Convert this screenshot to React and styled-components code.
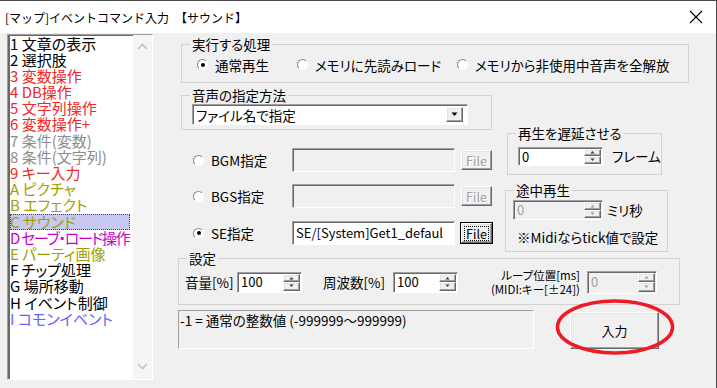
import React from "react";
import styled, { createGlobalStyle } from "styled-components";

const GlobalStyle = createGlobalStyle`
  html, body {
    margin: 0;
    padding: 0;
    background: #f0f0f0;
  }
  body {
    font-family: "Noto Sans CJK JP", "Noto Sans", sans-serif;
  }
`;

const items = [
  { text: "1 文章の表示", color: "#000000" },
  { text: "2 選択肢", color: "#000000" },
  { text: "3 変数操作", color: "#f02828" },
  { text: "4 DB操作", color: "#f02828" },
  { text: "5 文字列操作", color: "#f02828" },
  { text: "6 変数操作+", color: "#f02828" },
  { text: "7 条件(変数)", color: "#8c8c8c" },
  { text: "8 条件(文字列)", color: "#8c8c8c" },
  { text: "9 キー入力", color: "#f02828" },
  { text: "A ピクチャ", color: "#a0a000" },
  { text: "B エフェクト", color: "#a0a000" },
  { text: "C サウンド", color: "#a0a000", selected: true },
  { text: "D セーブ・ロード操作", color: "#c800c8", tight: true },
  { text: "E パーティ画像", color: "#a0a000" },
  { text: "F チップ処理", color: "#000000" },
  { text: "G 場所移動", color: "#000000" },
  { text: "H イベント制御", color: "#000000" },
  { text: "I コモンイベント", color: "#6464ff" },
];

const sunken = `
  border: 1px solid;
  border-color: #a0a0a0 #ffffff #ffffff #a0a0a0;
  box-shadow: inset 1px 1px #696969;
`;

const raised = `
  border: 1px solid;
  border-color: #ffffff #696969 #696969 #ffffff;
  box-shadow: inset -1px -1px #a0a0a0, inset 1px 1px #e3e3e3;
`;

const Window = styled.div`
  position: relative;
  width: 717px;
  height: 388px;
  box-sizing: border-box;
  border-top: 1px solid #4a4a4a;
  border-right: 1px solid #4a4a4a;
  background: #f0f0f0;
  overflow: hidden;
  font-family: "Noto Sans CJK JP", "Noto Sans", sans-serif;
  font-feature-settings: "palt";
  color: #000;
`;

const TitleBar = styled.div`
  height: 32px;
  background: #ffffff;
  display: flex;
  align-items: center;
  justify-content: space-between;
  padding: 0 13px 0 5px;
  font-size: 12px;
  font-feature-settings: normal;
`;

const Body = styled.div`
  display: flex;
  height: 355px;
`;

const ListBox = styled.div`
  box-sizing: border-box;
  margin: 1px 0 0 7px;
  width: 146px;
  height: 346px;
  ${sunken}
  box-shadow: inset 2px 1px #696969;
  background: #ffffff;
  display: flex;
`;

const ItemList = styled.div`
  flex: 1;
  padding: 0.5px 0 0 2px;
`;

const Item = styled.div`
  box-sizing: border-box;
  height: 16.2px;
  line-height: 16.2px;
  font-size: 15px;
  white-space: nowrap;
  letter-spacing: ${(p) => (p.$tight ? "-1.3px" : "0")};
  color: ${(p) => p.$color};
  width: ${(p) => (p.$selected ? "120px" : "auto")};
  background: ${(p) => (p.$selected ? "#c8c8f0" : "transparent")};
  outline: ${(p) => (p.$selected ? "1px dotted #404040" : "none")};
  outline-offset: -1px;
`;

const ScrollTrack = styled.div`
  width: 19px;
  background: #f5f5f5;
  display: flex;
  flex-direction: column;
  justify-content: space-between;
  align-items: center;
  padding: 8px 0 9px;
`;

const RightPanel = styled.div`
  margin-left: 25px;
  display: flex;
  flex-direction: column;
  font-size: 13.5px;
`;

const Frame = styled.div`
  position: relative;
  box-sizing: border-box;
  width: ${(p) => p.$w}px;
  height: ${(p) => p.$h}px;
  margin: ${(p) => p.$mt || 0}px 0 0 ${(p) => p.$ml || 0}px;
  border: 1px solid #d2d2d2;
  padding: ${(p) => p.$pad || "0"};
`;

const Legend = styled.span`
  position: absolute;
  top: -9px;
  left: 8px;
  padding: 0 2px;
  background: #f0f0f0;
  font-size: 13.5px;
  line-height: 16px;
  white-space: nowrap;
`;

const RadioRow = styled.div`
  display: flex;
  align-items: center;
  height: 100%;
  padding: 2px 0 0 15px;
  box-sizing: border-box;
`;

const Option = styled.div`
  display: flex;
  align-items: center;
  width: ${(p) => (p.$w ? `${p.$w}px` : "auto")};
  white-space: nowrap;
`;

const Radio = styled.span`
  box-sizing: border-box;
  flex: none;
  width: 11px;
  height: 11px;
  border-radius: 50%;
  border: 1px solid;
  border-color: #8a8a8a #ffffff #ffffff #8a8a8a;
  background: #ffffff;
  display: inline-flex;
  align-items: center;
  justify-content: center;
  margin-right: 7px;
  &::after {
    content: "";
    width: 4px;
    height: 4px;
    border-radius: 50%;
    background: ${(p) => (p.$checked ? "#000000" : "transparent")};
  }
`;

const Row2 = styled.div`
  display: flex;
  align-items: flex-start;
`;

const LeftCol = styled.div`
  margin-left: 3px;
  width: 311px;
  display: flex;
  flex-direction: column;
`;

const RightCol = styled.div`
  margin-left: 13px;
  display: flex;
  flex-direction: column;
`;

const Select = styled.div`
  box-sizing: border-box;
  width: 276px;
  height: 21px;
  ${sunken}
  background: #ffffff;
  display: flex;
  align-items: center;
`;

const SelectText = styled.span`
  flex: 1;
  padding-left: 3px;
  line-height: 18px;
`;

const SelectArrow = styled.span`
  box-sizing: border-box;
  width: 17px;
  height: 15px;
  margin-right: 4px;
  ${raised}
  background: #f0f0f0;
  display: flex;
  align-items: center;
  justify-content: center;
`;

const FileRow = styled.div`
  display: flex;
  align-items: center;
  height: 24px;
  margin-top: ${(p) => p.$mt}px;
  padding-left: 12px;
`;

const RowLabel = styled.span`
  width: ${(p) => p.$w}px;
  white-space: nowrap;
`;

const TextBox = styled.div`
  box-sizing: border-box;
  width: 163px;
  height: 24px;
  ${sunken}
  background: ${(p) => (p.$enabled ? "#ffffff" : "#f0f0f0")};
  padding-left: 3px;
  font-size: 13px;
  line-height: 22px;
  white-space: nowrap;
`;

const FileButton = styled.span`
  box-sizing: border-box;
  width: 31px;
  height: 20px;
  margin-left: 6px;
  ${raised}
  background: #f0f0f0;
  display: flex;
  align-items: center;
  justify-content: center;
  font-size: 12.5px;
  color: ${(p) => (p.$enabled ? "#000000" : "#a0a0a0")};
  text-shadow: ${(p) => (p.$enabled ? "none" : "1px 1px #ffffff")};
  outline: ${(p) => (p.$enabled ? "1px solid #000" : "none")};
`;

const FocusText = styled.span`
  outline: 1px dotted #000;
  line-height: 13px;
  padding: 0 1px;
`;

const SpinBox = styled.div`
  box-sizing: border-box;
  flex: none;
  display: flex;
  width: ${(p) => p.$w}px;
  height: ${(p) => p.$h || 20}px;
  ${sunken}
  background: ${(p) => (p.$disabled ? "#f0f0f0" : "#ffffff")};
`;

const SpinValue = styled.span`
  flex: 1;
  padding-left: 3px;
  font-size: 13px;
  line-height: ${(p) => p.$lh || 18}px;
  color: ${(p) => (p.$disabled ? "#a0a0a0" : "#000000")};
`;

const SpinButtons = styled.div`
  width: 17px;
  display: flex;
  flex-direction: column;
  padding: 1px 1px 1px 0;
`;

const SpinBtn = styled.span`
  flex: 1;
  box-sizing: border-box;
  ${raised}
  background: #f0f0f0;
  display: flex;
  align-items: center;
  justify-content: center;
`;

const InlineRow = styled.div`
  display: flex;
  align-items: center;
`;

const SideText = styled.span`
  margin-left: ${(p) => p.$ml || 0}px;
  white-space: nowrap;
`;

const Note = styled.div`
  margin: 9px 0 0 4px;
  line-height: 16px;
  white-space: nowrap;
`;

const SettingsRow = styled.div`
  display: flex;
  align-items: center;
  height: 100%;
  padding: 1px 0 0 6px;
  box-sizing: border-box;
`;

const FieldLabel = styled.span`
  width: ${(p) => p.$w}px;
  margin-left: ${(p) => p.$ml || 0}px;
  white-space: nowrap;
`;

const LoopLabel = styled.div`
  width: 107px;
  margin: 0 7px 0 15px;
  font-size: 11.5px;
  line-height: 14px;
  text-align: right;
  white-space: nowrap;
`;

const BottomRow = styled.div`
  display: flex;
  align-items: flex-start;
  margin-top: 5px;
`;

const InfoBox = styled.div`
  box-sizing: border-box;
  width: 356px;
  height: 39px;
  border: 1px solid;
  border-color: #a0a0a0 #ffffff #ffffff #a0a0a0;
  padding: 1px 0 0 1px;
  line-height: 17px;
  white-space: nowrap;
`;

const PushButton = styled.div`
  box-sizing: border-box;
  width: 89px;
  height: 37px;
  margin: 2px 0 0 36px;
  ${raised}
  background: #f0f0f0;
  display: flex;
  align-items: center;
  justify-content: center;
  font-size: 13px;
`;

const Marker = styled.svg`
  position: absolute;
  left: 555px;
  top: 297px;
  pointer-events: none;
`;

const Chevron = ({ up }) => (
  <svg width="11" height="7" viewBox="0 0 11 7">
    <polyline
      points={up ? "1,6 5.5,1.5 10,6" : "1,1 5.5,5.5 10,1"}
      fill="none"
      stroke="#c4c4c4"
      strokeWidth="1.6"
    />
  </svg>
);

const Tri = ({ up, color = "#000", size = 7 }) => (
  <svg width={size} height={Math.ceil(size / 2) + 1} viewBox="0 0 7 4">
    <polygon points={up ? "0.5,4 3.5,0.5 6.5,4" : "0.5,0 6.5,0 3.5,3.5"} fill={color} />
  </svg>
);

const Spinner = ({ w, h, value, disabled, lh }) => (
  <SpinBox $w={w} $h={h} $disabled={disabled}>
    <SpinValue $disabled={disabled} $lh={lh}>
      {value}
    </SpinValue>
    <SpinButtons>
      <SpinBtn>
        <Tri up size={5} color={disabled ? "#a0a0a0" : "#404040"} />
      </SpinBtn>
      <SpinBtn>
        <Tri size={5} color={disabled ? "#a0a0a0" : "#404040"} />
      </SpinBtn>
    </SpinButtons>
  </SpinBox>
);

const App = () => {
  return (
    <>
      <GlobalStyle />
      <Window>
        <TitleBar>
          <span>[マップ]イベントコマンド入力　【サウンド】</span>
          <svg width="14" height="14" viewBox="0 0 14 14">
            <path d="M1 1 L13 13 M13 1 L1 13" stroke="#000" strokeWidth="1.1" />
          </svg>
        </TitleBar>
        <Body>
          <ListBox>
            <ItemList>
              {items.map((it) => (
                <Item
                  key={it.text}
                  $color={it.color}
                  $selected={it.selected}
                  $tight={it.tight}
                >
                  {it.text}
                </Item>
              ))}
            </ItemList>
            <ScrollTrack>
              <Chevron up />
              <Chevron />
            </ScrollTrack>
          </ListBox>

          <RightPanel>
            <Frame $w={508} $h={39} $mt={11} $ml={3}>
              <Legend>実行する処理</Legend>
              <RadioRow>
                <Option $w={100}>
                  <Radio $checked />
                  通常再生
                </Option>
                <Option $w={160}>
                  <Radio />
                  メモリに先読みロード
                </Option>
                <Option>
                  <Radio />
                  メモリから非使用中音声を全解放
                </Option>
              </RadioRow>
            </Frame>

            <Row2>
              <LeftCol>
                <Frame $w={311} $h={35} $mt={12} $pad="8px 0 0 10px">
                  <Legend>音声の指定方法</Legend>
                  <Select>
                    <SelectText>ファイル名で指定</SelectText>
                    <SelectArrow>
                      <Tri />
                    </SelectArrow>
                  </Select>
                </Frame>
                <FileRow $mt={18}>
                  <Radio />
                  <RowLabel $w={81}>BGM指定</RowLabel>
                  <TextBox />
                  <FileButton>File</FileButton>
                </FileRow>
                <FileRow $mt={12}>
                  <Radio />
                  <RowLabel $w={81}>BGS指定</RowLabel>
                  <TextBox />
                  <FileButton>File</FileButton>
                </FileRow>
                <FileRow $mt={13}>
                  <Radio $checked />
                  <RowLabel $w={81}>SE指定</RowLabel>
                  <TextBox $enabled>SE/[System]Get1_defaul</TextBox>
                  <FileButton $enabled>
                    <FocusText>File</FocusText>
                  </FileButton>
                </FileRow>
              </LeftCol>

              <RightCol>
                <Frame $w={155} $h={42} $mt={50} $ml={2} $pad="12px 0 0 10px">
                  <Legend>再生を遅延させる</Legend>
                  <InlineRow>
                    <Spinner w={85} h={19} value="0" lh={17} />
                    <SideText $ml={9}>フレーム</SideText>
                  </InlineRow>
                </Frame>
                <Frame $w={163} $h={62} $mt={15} $pad="9px 0 0 7px">
                  <Legend>途中再生</Legend>
                  <InlineRow>
                    <Spinner w={90} h={20} value="0" disabled />
                    <SideText $ml={4}>ミリ秒</SideText>
                  </InlineRow>
                  <Note>※Midiならtick値で設定</Note>
                </Frame>
              </RightCol>
            </Row2>

            <Frame $w={502} $h={47} $mt={6}>
              <Legend>設定</Legend>
              <SettingsRow>
                <FieldLabel $w={52}>音量[%]</FieldLabel>
                <Spinner w={65} h={21} value="100" />
                <FieldLabel $w={70} $ml={21}>
                  周波数[%]
                </FieldLabel>
                <Spinner w={65} h={21} value="100" />
                <LoopLabel>
                  ループ位置[ms]
                  <br />
                  (MIDI:キー[±24])
                </LoopLabel>
                <Spinner w={70} h={23} value="0" disabled lh={20} />
              </SettingsRow>
            </Frame>

            <BottomRow>
              <InfoBox>-1 = 通常の整数値 (-999999～999999)</InfoBox>
              <PushButton>入力</PushButton>
            </BottomRow>
          </RightPanel>
        </Body>

        <Marker width="120" height="58" viewBox="0 0 120 58">
          <ellipse cx="60" cy="29" rx="57.5" ry="26" fill="none" stroke="#ed1c24" strokeWidth="3.6" />
        </Marker>
      </Window>
    </>
  );
};

export default App;
